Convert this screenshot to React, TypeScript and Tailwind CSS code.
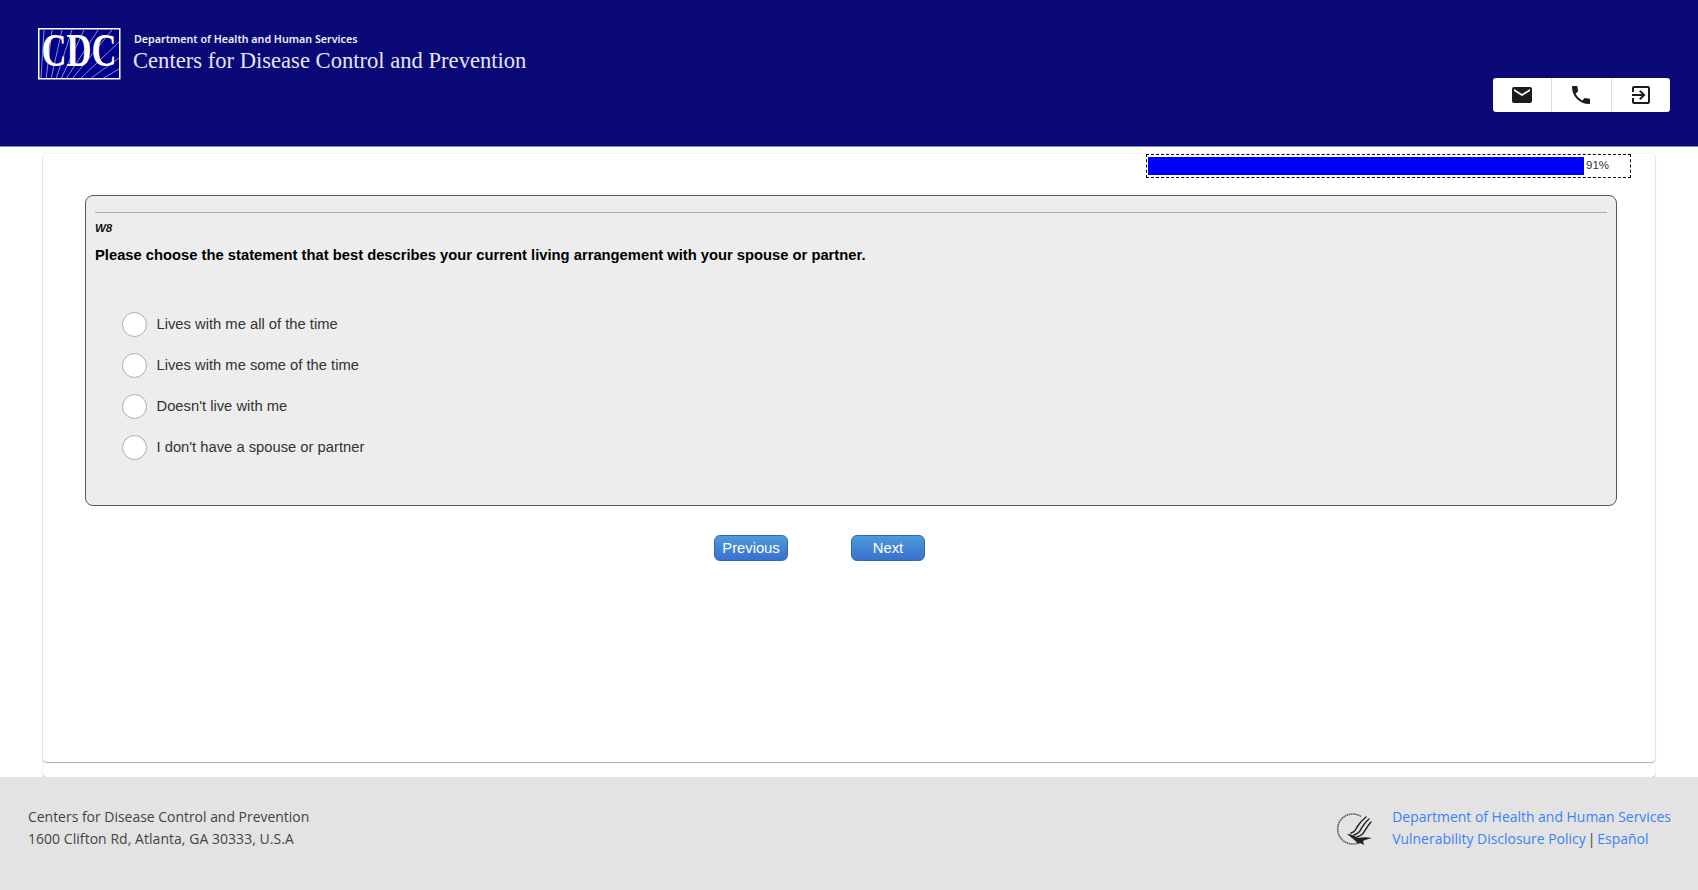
import { MdEmail, MdPhone, MdExitToApp } from "react-icons/md"

const options = [
  "Lives with me all of the time",
  "Lives with me some of the time",
  "Doesn't live with me",
  "I don't have a spouse or partner",
]

const CdcLogo = () => (
  <svg width="84" height="53" viewBox="0 0 84 53" className="block shrink-0 overflow-visible">
    <rect x="0.75" y="0.75" width="81" height="50" fill="#00008b" stroke="#fff" strokeWidth="1.5" />
    <g stroke="#c9c9f0" strokeWidth="0.7">
      <path d="M3 51 L6 2" />
      <path d="M8 51 L14 2" />
      <path d="M13 51 L24 2" />
      <path d="M18 51 L34 2" />
      <path d="M23 51 L46 2" />
      <path d="M28 51 L60 2" />
      <path d="M34 51 L74 2" />
      <path d="M42 51 L81 14" />
      <path d="M52 51 L81 30" />
      <path d="M64 51 L81 41" />
    </g>
    <text x="41" y="38" textAnchor="middle" fill="#fff" fontSize="46" fontWeight="700" fontFamily="'Liberation Serif', serif" textLength="75" lengthAdjust="spacingAndGlyphs">
      CDC
    </text>
  </svg>
)

const HhsLogo = () => (
  <svg width="36" height="36" viewBox="0 0 36 36" className="block shrink-0">
    <path d="M24 5.5 A15 15 0 1 0 21 32" fill="none" stroke="#555" strokeWidth="1.5" strokeDasharray="1.4 0.5" />
    <g fill="none" stroke="#222" strokeWidth="1.5" strokeLinecap="round">
      <path d="M29 6 C25 9 22 13 20 16 C19 19 17 21 14 22" />
      <path d="M32 8 C28 11 26 15 24 18 C23 21 20 23 17 24" />
      <path d="M34 11 C31 14 29 18 27 21 C26 23 23 25 20 26" />
    </g>
    <path d="M10 23 C14 23 18 25 21 27 C25 26 30 26 35 27 C31 28 28 29 26 30 L27 34 L23 32 L21 33 C19 30 14 26 10 23 Z" fill="#222" />
  </svg>
)

export default function App() {
  return (
    <div className="flex min-h-[890px] flex-col bg-white font-['Liberation_Sans',Arial,sans-serif]">
      {/* Header */}
      <header className="flex h-[147px] items-start justify-between border-b border-[#8a8ab0] bg-[#0a0a78] bg-[repeating-linear-gradient(180deg,#0c0c80_0px,#0c0c80_1px,#07076e_1px,#07076e_2px)] pl-[38px] pr-[28px]">
        <div className="mt-[28px] flex items-start">
          <CdcLogo />
          <div className="ml-[11px] mt-[4px] text-white">
            <div className="pl-px font-['Noto_Sans',sans-serif] text-[10.7px] font-semibold leading-[14px] text-[#f0f0f8]">
              Department of Health and Human Services
            </div>
            <div className="mt-[1px] font-['Liberation_Serif',serif] text-[22.6px] font-normal leading-[27px] text-[#e4e4f2]">
              Centers for Disease Control and Prevention
            </div>
          </div>
        </div>
        <div className="mt-[78px] flex h-[34px] w-[177px] divide-x divide-[#dcdce4] rounded-[3px] bg-white text-[#1c1c1c]">
          <button className="flex flex-1 items-center justify-center"><MdEmail size={24} /></button>
          <button className="flex flex-1 items-center justify-center"><MdPhone size={24} /></button>
          <button className="flex flex-1 items-center justify-center"><MdExitToApp size={24} /></button>
        </div>
      </header>

      {/* Cards */}
      <main className="flex-1 px-[43px] pt-[7px]">
        <div className="h-[623px] rounded-[4px] bg-white pb-[15px] shadow-[0_1px_1px_rgba(0,0,0,0.3),0_0_2px_rgba(0,0,0,0.1)]">
          <section className="h-[608px] rounded-[4px] bg-white shadow-[0_1px_1px_rgba(0,0,0,0.3),0_0_2px_rgba(0,0,0,0.1)]">
            {/* Progress */}
            <div className="flex justify-end pr-[24px]">
              <div className="flex h-[24px] w-[485px] items-center border border-dashed border-black py-[2px] pl-[1px] pr-[2px]">
                <div className="h-full w-[436px] bg-[#0000ff]" />
                <span className="ml-[2px] text-[11.5px] text-[#333]">91%</span>
              </div>
            </div>

            {/* Question */}
            <div className="ml-[42px] mr-[38px] mt-[17px] h-[311px] rounded-[8px] border-[1.5px] border-[#5a5a5a] bg-[#ededed] px-[9px] pt-[16px]">
              <div className="border-t border-[#aaa] pt-[8px] text-[11.5px] font-bold italic leading-[14px] text-[#111]">W8</div>
              <p className="mt-[12px] text-[14.75px] font-bold leading-[17px] text-black">
                Please choose the statement that best describes your current living arrangement with your spouse or partner.
              </p>
              <div className="mt-[48px] flex flex-col gap-[15.5px] pl-[27px]">
                {options.map((o) => (
                  <label key={o} className="flex h-[25.5px] items-center">
                    <span className="h-[25px] w-[25px] shrink-0 rounded-full border-[1.5px] border-[#adadad] bg-white" />
                    <span className="ml-[9.5px] -translate-y-px text-[14.75px] text-[#333]">{o}</span>
                  </label>
                ))}
              </div>
            </div>

            {/* Nav */}
            <div className="ml-[671px] mt-[29px] flex gap-[63px]">
              <button className="h-[26px] w-[74px] rounded-[6px] border border-[#2f6ea5] bg-gradient-to-b from-[#4d9ad9] to-[#3a70cf] text-[14.75px] text-white">Previous</button>
              <button className="h-[26px] w-[74px] rounded-[6px] border border-[#2f6ea5] bg-gradient-to-b from-[#4d9ad9] to-[#3a70cf] text-[14.75px] text-white">Next</button>
            </div>
          </section>
        </div>
      </main>

      {/* Footer */}
      <footer className="flex h-[113px] justify-between bg-[#e3e3e3] pl-[28px] pr-[27px] pt-[29px] font-['Open_Sans',sans-serif] text-[13.95px] leading-[22px] text-[#444]">
        <div>
          <div>Centers for Disease Control and Prevention</div>
          <div className="tracking-[0.07px]">1600 Clifton Rd, Atlanta, GA 30333, U.S.A</div>
        </div>
        <div className="flex items-start">
          <div className="mr-[19px] mt-[5px]"><HhsLogo /></div>
          <div>
            <div className="text-[#3b82f6]">Department of Health and Human Services</div>
            <div className="flex"><span className="text-[#3b82f6]">Vulnerability Disclosure Policy</span><span className="mx-[2px]">|</span><span className="text-[#3b82f6]">Español</span></div>
          </div>
        </div>
      </footer>
    </div>
  )
}
